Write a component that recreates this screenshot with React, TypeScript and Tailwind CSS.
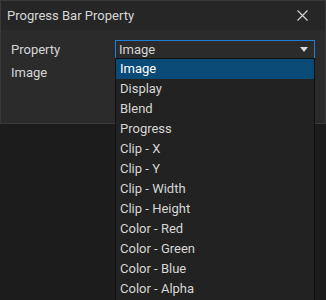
const options = [
  "Image",
  "Display",
  "Blend",
  "Progress",
  "Clip - X",
  "Clip - Y",
  "Clip - Width",
  "Clip - Height",
  "Color - Red",
  "Color - Green",
  "Color - Blue",
  "Color - Alpha",
];

export default function App() {
  return (
    <div className="relative h-[300px] w-[326px] overflow-hidden bg-[#1c1c1c] font-['Roboto',sans-serif] text-[13px] text-[#d6d6d6]">
      <div className="border border-[#3a3a3a] bg-[#2b2b2b]">
        <div className="flex h-[29px] items-center justify-between bg-[#262626] pl-[6px] pr-[17px]">
          <span>Progress Bar Property</span>
          <svg width="11" height="11" viewBox="0 0 11 11" className="text-[#d0d0d0]">
            <path d="M0.5 0.5L10.5 10.5M10.5 0.5L0.5 10.5" stroke="currentColor" strokeWidth="1.2" />
          </svg>
        </div>
        <div className="flex flex-col gap-[4px] px-[10px] pb-[10px] pt-[10px]">
          <div className="flex h-[19px] items-center">
            <span className="w-[104px]">Property</span>
            <div className="flex h-[20px] w-[200px] items-center justify-between border border-[#1e7ed8] bg-[#2b2b2b] pl-[3px] pr-[6px]">
              <span>Image</span>
              <svg width="8" height="5" viewBox="0 0 8 5">
                <path d="M0 0H8L4 5Z" fill="#d8d8d8" />
              </svg>
            </div>
          </div>
          <div className="flex h-[19px] items-center">
            <span>Image</span>
          </div>
          <div className="h-[27px]" />
        </div>
      </div>
      <div className="absolute left-[115px] top-[58px] w-[200px] border border-[#111] bg-[#222222] pb-[1px]">
        {options.map((o, i) => (
          <div
            key={o}
            className={`flex h-[20px] items-center pl-[4px] ${i === 0 ? "bg-[#0a4a76] text-white" : ""}`}
          >
            {o}
          </div>
        ))}
      </div>
    </div>
  );
}
